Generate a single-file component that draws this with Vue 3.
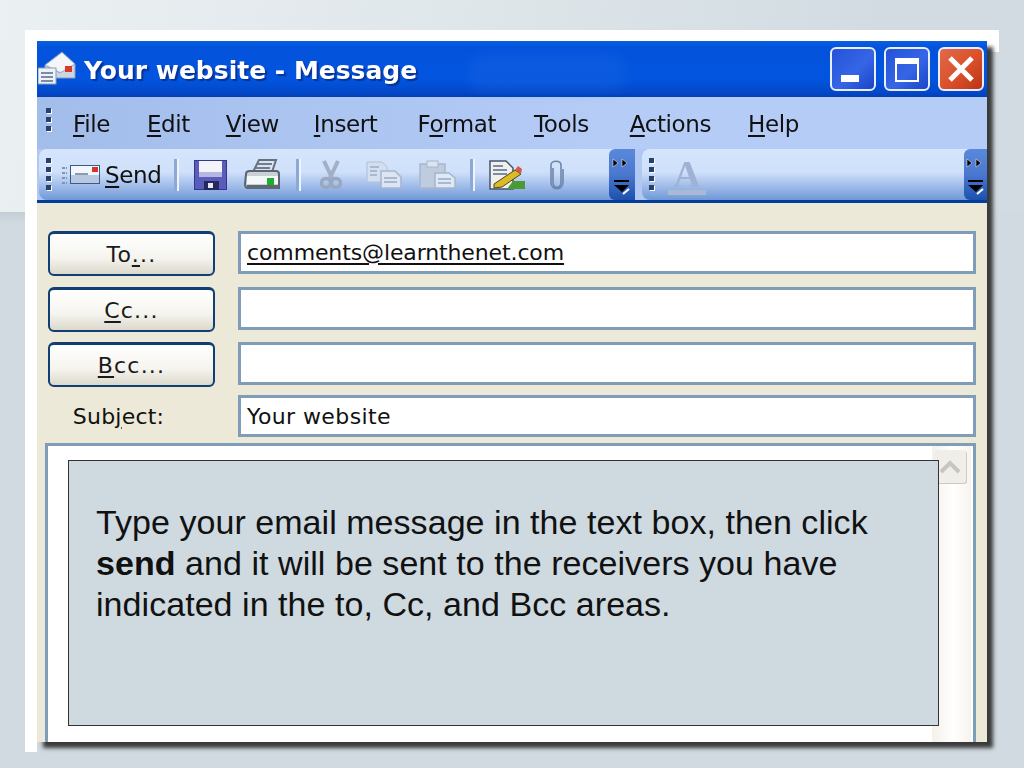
<script setup>
const menus = [
  { key: 'F', rest: 'ile', gap: 37 },
  { key: 'E', rest: 'dit', gap: 36 },
  { key: 'V', rest: 'iew', gap: 35 },
  { key: 'I', rest: 'nsert', gap: 40 },
  { pre: 'F', key: 'o', rest: 'rmat', gap: 38 },
  { key: 'T', rest: 'ools', gap: 41 },
  { key: 'A', rest: 'ctions', gap: 37 },
  { key: 'H', rest: 'elp', gap: 0 }
]
const fields = [
  { pre: 'To', key: '.', rest: '..', value: 'comments@learnthenet.com', link: true },
  { key: 'C', rest: 'c...', value: '' },
  { key: 'B', rest: 'cc...', value: '' }
]
</script>

<template>
  <div class="page">
    <div class="backdrop"></div>
    <div class="band"></div>
    <div class="frame">
      <div class="window">
        <header class="titlebar">
          <svg class="title-icon" width="38" height="34" viewBox="0 0 38 34">
            <path d="M7 14 24 1l13 12v14H7z" fill="#cbd6e5" stroke="#8b9db8" />
            <path d="M8 14 24 2l12 11-13 8z" fill="#f4f6f9" />
            <path d="M7 14l15 8 15-9" fill="none" stroke="#9aa8bc" />
            <rect x="27" y="15" width="7" height="6" fill="#d83a2c" />
            <rect x="0" y="17" width="18" height="16" fill="#eef1f5" stroke="#8b9db8" />
            <path d="M3 22h12M3 26h12M3 30h12" stroke="#7c8ca8" stroke-width="2" />
          </svg>
          <span class="title-text">Your website - Message</span>
          <span class="smudge"></span>
          <div class="win-buttons">
            <button type="button" class="win-btn">
              <span class="min-glyph"></span>
            </button>
            <button type="button" class="win-btn">
              <span class="max-glyph"></span>
            </button>
            <button type="button" class="win-btn close">
              <svg width="28" height="28" viewBox="0 0 28 28">
                <path d="M3 3l22 22M25 3 3 25" stroke="#fff" stroke-width="5" fill="none" />
              </svg>
            </button>
          </div>
        </header>

        <nav class="menubar">
          <span class="grip"><i></i><i></i><i></i></span>
          <span
            v-for="m in menus"
            :key="m.key"
            class="menu-item"
            :style="{ marginRight: m.gap + 'px' }"
          >{{ m.pre }}<u>{{ m.key }}</u>{{ m.rest }}</span>
        </nav>

        <div class="toolbars">
          <div class="toolbar first">
            <span class="grip tall"><i></i><i></i><i></i><i></i></span>
            <svg class="ic send-ic" width="38" height="22" viewBox="0 0 38 22">
              <path d="M0 4h5M0 9h5M0 14h5M0 19h5" stroke="#7f93b2" stroke-width="2" stroke-dasharray="3 1" />
              <rect x="8.500" y="1.500" width="29" height="18" fill="#f3f6fb" stroke="#3c5a88" />
              <rect x="9" y="11" width="28" height="8" fill="#b8c8e0" />
              <rect x="13" y="9" width="13" height="2" fill="#8b9bb5" />
              <rect x="30" y="3" width="6" height="5" fill="#d8322a" />
            </svg>
            <span class="send-label"><u>S</u>end</span>
            <span class="sep"></span>
            <svg class="ic save-ic" width="33" height="30" viewBox="0 0 33 30">
              <rect width="33" height="30" fill="#33368c" />
              <rect x="1" y="1" width="31" height="28" fill="#5a5cba" />
              <rect x="5" y="1" width="23" height="16" fill="#f2f3fb" />
              <rect x="5" y="12" width="23" height="5" fill="#b4b8e0" />
              <rect x="10" y="21" width="15" height="9" fill="#25275f" />
              <rect x="14" y="23" width="5" height="5" fill="#e8e8ee" />
            </svg>
            <svg class="ic print-ic" width="36" height="31" viewBox="0 0 36 31">
              <path d="M9 13 15 1h17l-4 12z" fill="#dbe3ee" stroke="#66707e" stroke-width="2" />
              <path d="M14 5h14M12 9h14" stroke="#6f7d93" stroke-width="2" />
              <path d="M2 15c0-2 2-3 4-3h26c2 0 3 1 3 3v14H4c-2 0-3-2-3-4z" fill="#c9d0d8" stroke="#5b636e" stroke-width="2" />
              <rect x="3" y="17" width="31" height="8" fill="#f4f7f7" />
              <rect x="3" y="26" width="32" height="4" fill="#5e6874" />
              <rect x="23" y="19" width="7" height="7" fill="#1fae2b" />
            </svg>
            <span class="sep"></span>
            <svg class="ic cut-ic" width="22" height="30" viewBox="0 0 22 30">
              <path d="M4 1l9 19M18 1 9 20" stroke="#a3afc4" stroke-width="4" fill="none" />
              <circle cx="6" cy="23" r="4.500" fill="none" stroke="#9aa8bf" stroke-width="3.500" />
              <circle cx="16" cy="23" r="4.500" fill="none" stroke="#9aa8bf" stroke-width="3.500" />
            </svg>
            <svg class="ic copy-ic" width="36" height="28" viewBox="0 0 36 28">
              <path d="M1 1h15l5 5v15H1z" fill="#d3dff1" stroke="#b2bfd4" />
              <path d="M15 10h14l6 6v11H15z" fill="#dbe5f4" stroke="#a7b5cb" stroke-width="1.500" />
              <path d="M4 6h9M4 10h7M4 14h7M18 17h13M18 21h13" stroke="#aab8cd" stroke-width="2" />
            </svg>
            <svg class="ic paste-ic" width="37" height="29" viewBox="0 0 37 29">
              <rect x="1" y="4" width="25" height="24" fill="#bfcbde" stroke="#aab7cb" stroke-width="1.500" />
              <rect x="8" y="1" width="11" height="6" fill="#dbe4f1" stroke="#a9b6ca" />
              <path d="M16 13h14l6 5v10H16z" fill="#dfe8f5" stroke="#a7b5cb" stroke-width="1.500" />
              <path d="M19 19h13M19 23h13" stroke="#aab8cd" stroke-width="2" />
            </svg>
            <span class="sep"></span>
            <svg class="ic spell-ic" width="36" height="30" viewBox="0 0 36 30">
              <path d="M1 1h16l7 7v21H1z" fill="#f0f1ee" stroke="#46566e" stroke-width="1.500" />
              <path d="M4 6h10M4 10h14M4 14h14" stroke="#7f8da2" stroke-width="2" />
              <path d="M5 24 26 10l6 4-19 13-8 1z" fill="#dcbc22" stroke="#4a4520" />
              <path d="M26 10l3-4 4 3-1 5z" fill="#d8584a" />
              <path d="M24 21h12v8H18z" fill="#4b9a34" />
            </svg>
            <svg class="ic clip-ic" width="17" height="30" viewBox="0 0 17 30">
              <path d="M5 8v14c0 7 8 7 8 0V5c0-5-10-5-10 0v17c0 9 12 9 12 0V9" fill="none" stroke="#6f86ab" stroke-width="1.600" />
            </svg>
            <span class="chevron">
              <svg width="20" height="44" viewBox="0 0 20 44">
                <path d="M1 6l5 4-5 4zM10 6l5 4-5 4z" fill="#000" stroke="#fff" stroke-width=".5" />
                <path d="M2 27h15v2H2zM2 32h15l-7 7z" fill="#000" />
                <path d="M11 41l6-5" stroke="#fff" stroke-width="2" />
              </svg>
            </span>
          </div>
          <div class="toolbar second">
            <span class="grip tall"><i></i><i></i><i></i><i></i></span>
            <span class="font-a">A</span>
            <span class="spacer"></span>
            <span class="chevron narrow">
              <svg width="20" height="44" viewBox="0 0 20 44">
                <path d="M1 6l5 4-5 4zM10 6l5 4-5 4z" fill="#000" stroke="#fff" stroke-width=".5" />
                <path d="M2 27h15v2H2zM2 32h15l-7 7z" fill="#000" />
                <path d="M11 41l6-5" stroke="#fff" stroke-width="2" />
              </svg>
            </span>
          </div>
        </div>

        <main class="compose">
          <div class="fields">
            <template v-for="f in fields" :key="f.key">
              <button type="button" class="addr-btn">{{ f.pre }}<u>{{ f.key }}</u>{{ f.rest }}</button>
              <div class="input" :class="{ link: f.link }">{{ f.value }}</div>
            </template>
            <span class="subject-label">Sub<u>j</u>ect:</span>
            <div class="input subject">Your website</div>
          </div>

          <div class="message">
            <div class="scrollbar">
              <span class="scroll-up">
                <svg width="22" height="14" viewBox="0 0 22 14">
                  <path d="M2 12 11 3l9 9" fill="none" stroke="#c6c6bf" stroke-width="4" />
                </svg>
              </span>
            </div>
            <div class="callout">
              Type your email message in the text box, then click
              <b>send</b> and it will be sent to the receivers you have
              indicated in the to, Cc, and Bcc areas.
            </div>
          </div>
        </main>
      </div>
    </div>
  </div>
</template>

<style>
html, body { margin: 0; background: #d0dae0; }
</style>

<style scoped>
.page {
  position: relative;
  width: 1024px;
  height: 768px;
  overflow: hidden;
  padding: 30px 0 0 25px;
  box-sizing: border-box;
  background: #d0dae0;
  font-family: "DejaVu Sans", sans-serif;
  color: #111;
}
.backdrop {
  position: absolute;
  left: 0;
  top: 0;
  width: 1024px;
  height: 212px;
  background: linear-gradient(100deg, #ebf0f2 0%, #dfe6ea 45%, #d1dbe1 85%);
}
.band {
  position: absolute;
  left: 0;
  top: 212px;
  width: 25px;
  height: 12px;
  background: linear-gradient(#c5ced4, #d0dae0);
}
.frame {
  position: relative;
  width: 962px;
  height: 722px;
  box-sizing: border-box;
  border-top: 11px solid #fff;
  border-left: 12px solid #fff;
}
.frame::after {
  content: '';
  position: absolute;
  right: -12px;
  top: -11px;
  width: 12px;
  height: 22px;
  background: #fff;
  z-index: 0;
}
.window {
  position: relative;
  z-index: 1;
  width: 950px;
  height: 701px;
  display: flex;
  flex-direction: column;
  background: #ece9d8;
  box-shadow: 6px 6px 4px #3a3a3a;
}

.titlebar {
  position: relative;
  height: 56px;
  display: flex;
  align-items: center;
  background: linear-gradient(#0a5fe2 0, #0352dc 12%, #0254de 70%, #0348c8 92%, #033fb4 100%);
}
.title-icon { margin: -3px 8px 0 1px; filter: blur(.4px); }
.title-text {
  color: #fff;
  font-weight: 700;
  font-size: 25px;
  text-shadow: 2px 2px 1px #0a3296;
  filter: blur(.3px);
  margin-top: 3px;
}
.smudge {
  position: absolute;
  left: 430px;
  top: 12px;
  width: 160px;
  height: 38px;
  border-radius: 18px;
  background: #1b66e4;
  opacity: .35;
  filter: blur(6px);
}
.win-buttons {
  margin-left: auto;
  margin-right: 3px;
  margin-top: -1px;
  display: flex;
  gap: 8px;
}
.win-btn {
  width: 46px;
  height: 44px;
  padding: 0;
  box-sizing: border-box;
  border: 2px solid #e8eefc;
  border-radius: 6px;
  background: linear-gradient(135deg, #2352d8, #3666e6 55%, #1a44c8);
  display: flex;
  align-items: center;
  justify-content: center;
  position: relative;
}
.win-btn.close { background: linear-gradient(135deg, #e26a4a, #da4f2a 55%, #bb3414); }
.min-glyph {
  position: absolute;
  left: 9px;
  bottom: 7px;
  width: 18px;
  height: 7px;
  background: #fff;
}
.max-glyph {
  width: 24px;
  height: 24px;
  box-sizing: border-box;
  border: 2px solid #fff;
  border-top-width: 6px;
  margin-top: 2px;
}

.menubar {
  height: 52px;
  display: flex;
  align-items: center;
  padding-left: 9px;
  box-sizing: border-box;
  background: linear-gradient(90deg, #a3bdeb, #b4ccf6 60%);
  font-size: 23px;
  letter-spacing: -.4px;
}
.grip {
  display: flex;
  flex-direction: column;
  gap: 5px;
  width: 6px;
  margin-top: -6px;
}
.grip i {
  width: 5px;
  height: 5px;
  background: #27416f;
  box-shadow: 1px 1px 0 #fff;
}
.menu-item { filter: blur(.3px); margin-top: 2px; }
.menubar .grip { margin-right: 21px; margin-top: -8px; gap: 4px; }
u { text-underline-offset: 3px; text-decoration-thickness: 2px; }

.toolbars {
  height: 54px;
  display: flex;
  background: #b0c8f2;
  border-bottom: 3px solid #023e9a;
  box-sizing: border-box;
}
.toolbar {
  display: flex;
  align-items: center;
  height: 51px;
  border-radius: 8px 0 0 8px;
  background: linear-gradient(#d5e5fc 0, #cfe0fa 45%, #9cb9e8 75%, #6f98d6 100%);
}
.toolbar.first { width: 596px; margin-left: 2px; padding-left: 7px; box-sizing: border-box; }
.toolbar.second { flex: 1; margin-left: 7px; padding-left: 7px; }
.grip.tall { margin-top: -1px; gap: 4px; }
.ic { flex: none; filter: blur(.5px); }
.send-ic { margin-left: 10px; }
.send-label { font-size: 23px; letter-spacing: -.4px; margin-left: 5px; filter: blur(.3px); }
.sep {
  width: 3px;
  height: 32px;
  background: #8ca8d4;
  box-shadow: 2px 0 0 #eef4fe;
  flex: none;
}
.send-label + .sep { margin-left: 13px; }
.save-ic { margin-left: 17px; }
.print-ic { margin-left: 17px; }
.print-ic + .sep { margin-left: 16px; }
.cut-ic { margin-left: 21px; }
.copy-ic { margin-left: 24px; }
.paste-ic { margin-left: 17px; }
.paste-ic + .sep { margin-left: 14px; }
.spell-ic { margin-left: 16px; }
.clip-ic { margin-left: 23px; }
.chevron {
  margin-left: auto;
  width: 26px;
  height: 51px;
  flex: none;
  display: flex;
  align-items: center;
  justify-content: center;
  background: linear-gradient(#5a88dc, #4a78cf 50%, #1d50ae);
  border-radius: 6px 0 0 6px;
}
.chevron.narrow { width: 23px; }
.font-a {
  margin-left: 13px;
  width: 38px;
  text-align: center;
  font: 700 38px/32px "Liberation Serif", serif;
  color: #9fb2d6;
  border-bottom: 5px solid #aab9d4;
  filter: blur(.3px);
  margin-top: 3px;
}
.spacer { flex: 1; }

.compose {
  flex: 1;
  min-height: 0;
  display: flex;
  flex-direction: column;
  padding: 28px 11px 0 8px;
}
.fields {
  display: grid;
  grid-template-columns: 167px 1fr;
  grid-template-rows: 56px 55px 53px 48px;
  column-gap: 23px;
  margin-left: 3px;
  font-size: 22px;
  align-items: start;
}
.addr-btn {
  height: 45px;
  padding: 0;
  font: inherit;
  color: #1a1a1a;
  box-sizing: border-box;
  border: 2px solid #0f3f73;
  border-top-width: 3px;
  border-radius: 6px;
  background: linear-gradient(#fff, #f5f4ee 60%, #dcd8cc);
  letter-spacing: 1.2px;
}
.input {
  height: 43px;
  box-sizing: border-box;
  border: 3px solid #7f9db9;
  background: #fff;
  display: flex;
  align-items: center;
  padding-left: 6px;
}
.input.link {
  letter-spacing: -.12px;
  text-decoration: underline;
  text-underline-offset: 3px;
  text-decoration-thickness: 2px;
}
.subject { height: 42px; letter-spacing: .4px; }
.subject-label {
  height: 42px;
  display: flex;
  align-items: center;
  justify-content: center;
  white-space: pre;
  margin-right: 26px;
  letter-spacing: .2px;
}
.message {
  flex: 1;
  min-height: 0;
  position: relative;
  display: flex;
  justify-content: flex-end;
  background: #fff;
  border: 3px solid #7f9db9;
  border-bottom: 0;
  padding-right: 2px;
}
.scrollbar {
  width: 39px;
  padding-top: 4px;
  box-sizing: border-box;
  background: linear-gradient(90deg, #f4f1ea, #fff 55%, #f6f4ee);
}
.scroll-up {
  display: flex;
  align-items: center;
  justify-content: center;
  margin-left: 2px;
  width: 32px;
  height: 33px;
  background: #f0eee8;
  border-radius: 3px;
  box-shadow: 1px 1px 0 #cfc9be;
}
.callout {
  position: absolute;
  left: 20px;
  top: 14px;
  width: 871px;
  height: 266px;
  box-sizing: border-box;
  padding: 41px 40px 0 27px;
  border: 1px solid #333;
  background: #cfd9e0;
  font: 34px/41px "Liberation Sans", Arial, sans-serif;
  letter-spacing: .05px;
  color: #111;
}
</style>
